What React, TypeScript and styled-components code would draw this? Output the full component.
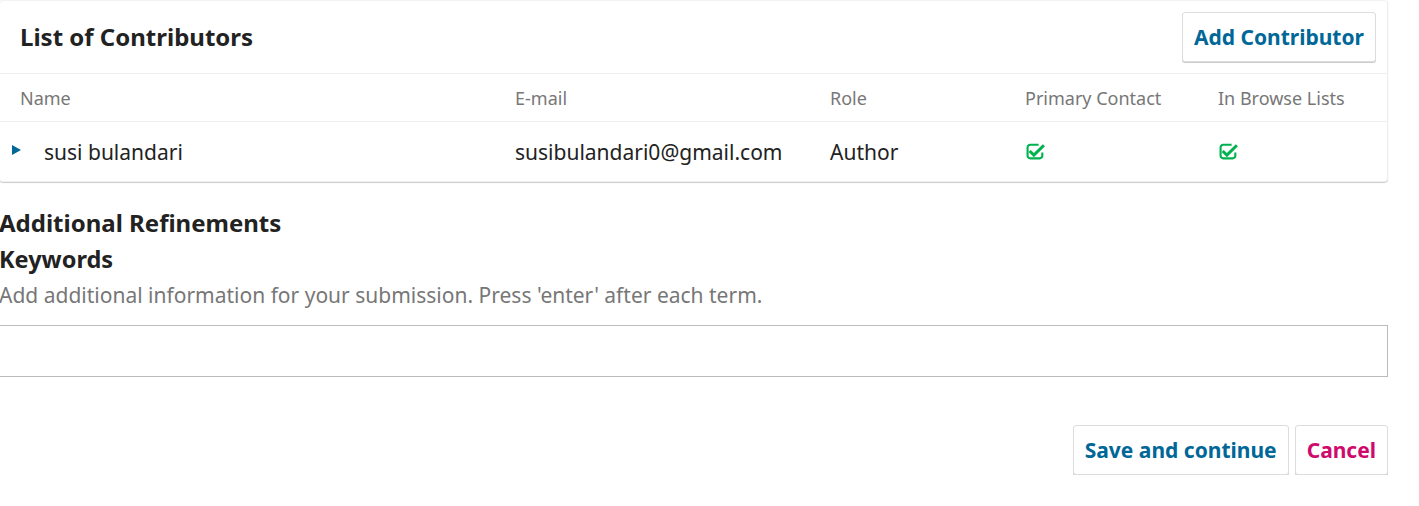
import styled, { createGlobalStyle } from "styled-components";

const GlobalStyle = createGlobalStyle`
  body {
    margin: 0;
    background: #fff;
    font-family: "Noto Sans", "Open Sans", sans-serif;
    color: #222;
  }
`;

const Page = styled.div`
  width: 1389px;
  margin-left: -1px;
`;

const Panel = styled.div`
  border: 1px solid #eee;
  border-top-color: #f2f2f2;
  border-radius: 4px;
  box-shadow: 0 1px 1px rgba(0, 0, 0, 0.2);
  background: #fff;
`;

const PanelHeader = styled.div`
  display: flex;
  align-items: center;
  justify-content: space-between;
  height: 72px;
  padding: 0 11px 0 20px;
  border-bottom: 1px solid #eee;
`;

const Title = styled.h2`
  margin: -2px 0 0;
  font-size: 24px;
  font-weight: 700;
  color: #222;
`;

const Button = styled.button<{ $danger?: boolean }>`
  height: 50px;
  padding: 0 11px;
  background: #fff;
  border: 1px solid #ddd;
  border-radius: 3px;
  box-shadow: 0 1px 0 #ccc;
  font-family: "Noto Sans", sans-serif;
  font-size: 21px;
  font-weight: 700;
  color: ${(p) => (p.$danger ? "#d00a6c" : "#006798")};
  cursor: pointer;
`;

const Grid = styled.div`
  display: grid;
  grid-template-columns: 515px 315px 195px 193px 1fr;
`;

const HeadRow = styled(Grid)`
  height: 47px;
  align-items: center;
  border-bottom: 1px solid #eee;
  font-size: 18px;
  color: #777;

  & > span:first-child {
    padding-left: 20px;
  }
`;

const BodyRow = styled(Grid)`
  height: 59px;
  align-items: center;
  font-size: 21px;
  color: #222;
`;

const NameCell = styled.span`
  display: flex;
  align-items: center;
  gap: 23px;
  padding-left: 12px;
`;

const Caret = styled.span`
  width: 0;
  height: 0;
  border-top: 5.5px solid transparent;
  border-bottom: 5.5px solid transparent;
  border-left: 9px solid #006798;
  margin-top: -3px;
`;

const CheckCell = styled.span`
  display: flex;
  align-items: center;
  padding-left: 1px;
  margin-top: -2px;
`;

const Section = styled.div`
  margin-top: 25px;
`;

const SectionTitle = styled.h3`
  margin: 0;
  font-size: 24px;
  font-weight: 700;
  line-height: 32px;
`;

const FieldLabel = styled.label`
  display: block;
  margin-top: 4px;
  font-size: 23.5px;
  font-weight: 700;
  line-height: 32px;
`;

const Description = styled.div`
  margin-top: 4px;
  font-size: 21px;
  color: #777;
  line-height: 32px;
`;

const Input = styled.div`
  margin-top: 14px;
  height: 50px;
  border: 1px solid #bbb;
`;

const Actions = styled.div`
  display: flex;
  justify-content: flex-end;
  gap: 6px;
  margin-top: 48px;
`;

function CheckIcon() {
  return (
    <svg width="20" height="18" viewBox="0 0 19 17">
      <path
        d="M12 2.5H4A2.5 2.5 0 0 0 1.5 5v8A2.5 2.5 0 0 0 4 15.5h9A2.5 2.5 0 0 0 15.5 13v-3"
        fill="none"
        stroke="#00b24e"
        strokeWidth="2"
      />
      <path d="M4.5 7.5l3 3L16 2l2 2L7.5 14.5 2.5 9.5z" fill="#00b24e" />
    </svg>
  );
}

export default function App() {
  return (
    <Page>
      <GlobalStyle />
      <Panel>
        <PanelHeader>
          <Title>List of Contributors</Title>
          <Button>Add Contributor</Button>
        </PanelHeader>
        <HeadRow>
          <span>Name</span>
          <span>E-mail</span>
          <span>Role</span>
          <span>Primary Contact</span>
          <span>In Browse Lists</span>
        </HeadRow>
        <BodyRow>
          <NameCell>
            <Caret />
            susi bulandari
          </NameCell>
          <span>susibulandari0@gmail.com</span>
          <span>Author</span>
          <CheckCell>
            <CheckIcon />
          </CheckCell>
          <CheckCell>
            <CheckIcon />
          </CheckCell>
        </BodyRow>
      </Panel>
      <Section>
        <SectionTitle>Additional Refinements</SectionTitle>
        <FieldLabel>Keywords</FieldLabel>
        <Description>
          Add additional information for your submission. Press 'enter' after each term.
        </Description>
        <Input />
      </Section>
      <Actions>
        <Button>Save and continue</Button>
        <Button $danger>Cancel</Button>
      </Actions>
    </Page>
  );
}
